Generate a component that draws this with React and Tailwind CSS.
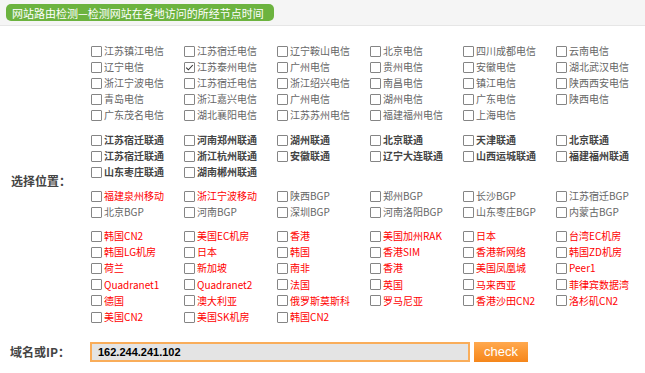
const telecom = [
  "江苏镇江电信", "江苏宿迁电信", "辽宁鞍山电信", "北京电信", "四川成都电信", "云南电信",
  "辽宁电信", "江苏泰州电信", "广州电信", "贵州电信", "安徽电信", "湖北武汉电信",
  "浙江宁波电信", "江苏宿迁电信", "浙江绍兴电信", "南昌电信", "镇江电信", "陕西西安电信",
  "青岛电信", "浙江嘉兴电信", "广州电信", "湖州电信", "广东电信", "陕西电信",
  "广东茂名电信", "湖北襄阳电信", "江苏苏州电信", "福建福州电信", "上海电信",
];

const unicom = [
  "江苏宿迁联通", "河南郑州联通", "湖州联通", "北京联通", "天津联通", "北京联通",
  "江苏宿迁联通", "浙江杭州联通", "安徽联通", "辽宁大连联通", "山西运城联通", "福建福州联通",
  "山东枣庄联通", "湖南郴州联通",
];

const bgp = [
  { name: "福建泉州移动", red: true },
  { name: "浙江宁波移动", red: true },
  { name: "陕西BGP" }, { name: "郑州BGP" }, { name: "长沙BGP" }, { name: "江苏宿迁BGP" },
  { name: "北京BGP" }, { name: "河南BGP" }, { name: "深圳BGP" }, { name: "河南洛阳BGP" },
  { name: "山东枣庄BGP" }, { name: "内蒙古BGP" },
];

const overseas = [
  "韩国CN2", "美国EC机房", "香港", "美国加州RAK", "日本", "台湾EC机房",
  "韩国LG机房", "日本", "韩国", "香港SIM", "香港新网络", "韩国ZD机房",
  "荷兰", "新加坡", "南非", "香港", "美国凤凰城", "Peer1",
  "Quadranet1", "Quadranet2", "法国", "英国", "马来西亚", "菲律宾数据湾",
  "德国", "澳大利亚", "俄罗斯莫斯科", "罗马尼亚", "香港沙田CN2", "洛杉矶CN2",
  "美国CN2", "美国SK机房", "韩国CN2",
];

function Box({ checked }) {
  return (
    <span className="flex h-[11px] w-[11px] shrink-0 items-center justify-center rounded-[1px] border border-[#858585] bg-white">
      {checked ? (
        <svg width="9" height="9" viewBox="0 0 9 9">
          <polyline points="1.2,4.6 3.4,6.8 7.8,2" fill="none" stroke="#333" strokeWidth="1.1" />
        </svg>
      ) : null}
    </span>
  );
}

function Option({ label, className, checked }) {
  return (
    <label className="flex h-4 items-center gap-[2px] whitespace-nowrap">
      <Box checked={checked} />
      <span className={className}>{label}</span>
    </label>
  );
}

function Group({ children, className = "" }) {
  return <div className={`grid grid-cols-[repeat(6,93px)] ${className}`}>{children}</div>;
}

export default function App() {
  return (
    <div
      className="min-h-[373px] w-[645px] bg-white text-[10px] leading-4"
      style={{ fontFamily: '"Noto Sans CJK SC", "Noto Sans", sans-serif' }}
    >
      <div className="flex h-[26px] items-center border-b border-[#e6e6e6] bg-[#f5f5f5] pl-[6px]">
        <div className="flex h-[17px] w-[268px] items-center rounded-[5px] bg-[#6cb33f] pl-[6px] text-[11px] text-white">
          网站路由检测—检测网站在各地访问的所经节点时间
        </div>
      </div>

      <div className="flex pt-[17px]">
        <div className="flex w-[91px] shrink-0 items-center pb-[6px] pl-[11px] text-[12px] font-bold text-[#444]">
          选择位置：
        </div>
        <div>
          <Group>
            {telecom.map((t, i) => (
              <Option key={i} label={t} className="text-[#666]" checked={i === 7} />
            ))}
          </Group>
          <Group className="mt-[9px]">
            {unicom.map((t, i) => (
              <Option key={i} label={t} className="font-bold text-[#444]" />
            ))}
          </Group>
          <Group className="mt-[8px]">
            {bgp.map((b, i) => (
              <Option key={i} label={b.name} className={b.red ? "text-[#f00]" : "text-[#666]"} />
            ))}
          </Group>
          <Group className="mt-[8px] [&>label]:h-[16.2px]">
            {overseas.map((t, i) => (
              <Option key={i} label={t} className="text-[#f00]" />
            ))}
          </Group>
        </div>
      </div>

      <div className="mt-[17px] flex items-center">
        <div className="w-[90px] shrink-0 pl-[10px] text-[12px] font-bold text-[#444]">域名或IP：</div>
        <div className="flex h-5 w-[380px] items-center border-2 border-[#f9ad5a] bg-[#e4e4e4] pl-[6px] font-['Liberation_Sans',Arial,sans-serif] text-[11px] font-bold text-black">
          162.244.241.102
        </div>
        <button
          type="button"
          className="ml-1 flex h-5 w-[54px] items-center justify-center bg-gradient-to-b from-[#ffa94f] via-[#fb9731] to-[#f5861a] font-['Liberation_Sans',Arial,sans-serif] text-[13px] text-white"
        >
          check
        </button>
      </div>
    </div>
  );
}
